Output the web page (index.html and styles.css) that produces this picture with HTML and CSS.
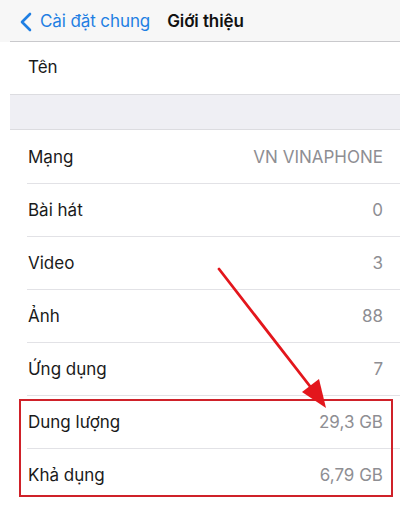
FILE: index.html
```html
<!DOCTYPE html>
<html lang="vi">
<head>
<meta charset="utf-8">
<link rel="stylesheet" href="styles.css">
</head>
<body>
<div class="screen">
  <header class="nav">
    <div class="back">
      <svg class="chev" width="12" height="20" viewBox="0 0 12 20"><path d="M10 2 L2 10 L10 18" fill="none" stroke="#1f7fe3" stroke-width="2.6" stroke-linecap="round" stroke-linejoin="round"/></svg>
      <span class="back-label">Cài đặt chung</span>
    </div>
    <div class="title">Giới thiệu</div>
  </header>
  <div class="group first">
    <div class="row"><span class="label">Tên</span></div>
  </div>
  <div class="spacer"></div>
  <div class="group">
    <div class="row"><span class="label">Mạng</span><span class="value">VN VINAPHONE</span></div>
    <div class="row"><span class="label">Bài hát</span><span class="value">0</span></div>
    <div class="row"><span class="label">Video</span><span class="value">3</span></div>
    <div class="row"><span class="label">Ảnh</span><span class="value">88</span></div>
    <div class="row"><span class="label">Ứng dụng</span><span class="value">7</span></div>
    <div class="row"><span class="label">Dung lượng</span><span class="value">29,3 GB</span></div>
    <div class="row"><span class="label">Khả dụng</span><span class="value">6,79 GB</span></div>
  </div>
  <div class="highlight"></div>
  <svg class="arrow" width="400" height="516" viewBox="0 0 400 516">
    <line x1="219" y1="269" x2="316" y2="394" stroke="#e3161c" stroke-width="2.8" stroke-linecap="round"/>
    <polygon points="302,392 319,379 326,408" fill="#e3161c"/>
  </svg>
</div>
</body>
</html>
```
FILE: styles.css
```css
* { box-sizing: border-box; }
html, body { margin: 0; padding: 0; background: #fff; }
body { font-family: Inter, "Noto Sans", sans-serif; }
.screen { position: relative; width: 400px; height: 516px; overflow: hidden; background: #fff; }
.nav {
  height: 42px;
  background: #f7f7f7;
  display: flex;
  align-items: center;
  padding-left: 20px;
  position: relative;
}
.nav::after {
  content: "";
  position: absolute;
  left: 10px; right: 0; bottom: 0;
  height: 1px;
  background: #c9c9cc;
}
.back { display: flex; align-items: center; gap: 8px; }
.chev { display: block; margin-top: 1px; }
.back-label { color: #1f7fe3; font-size: 17px; letter-spacing: -0.1px; }
.title { margin-left: 17px; font-size: 17px; font-weight: 600; color: #111; letter-spacing: -0.1px; }
.group { background: #fff; }
.row {
  height: 53px;
  display: flex;
  align-items: center;
  justify-content: space-between;
  padding: 0 17px 0 28px;
  position: relative;
  font-size: 17px;
  color: #1a1a1a;
}
.row + .row::before {
  content: "";
  position: absolute;
  left: 27px; right: 0; top: 0;
  height: 1px;
  background: #e2e2e6;
}
.first .row { height: 52px; padding-bottom: 2px; }
.value { color: #8e8e93; }
.spacer {
  height: 36px;
  margin-left: 10px;
  background: #efeff4;
  border-top: 1px solid #dcdce0;
  border-bottom: 1px solid #dcdce0;
}
.group:last-of-type { border-bottom: 1px solid #e2e2e6; }
.highlight {
  position: absolute;
  left: 19px; top: 399px;
  width: 374px; height: 98px;
  border: 2.5px solid #cf2129;
}
.arrow { position: absolute; left: 0; top: 0; pointer-events: none; }
```
